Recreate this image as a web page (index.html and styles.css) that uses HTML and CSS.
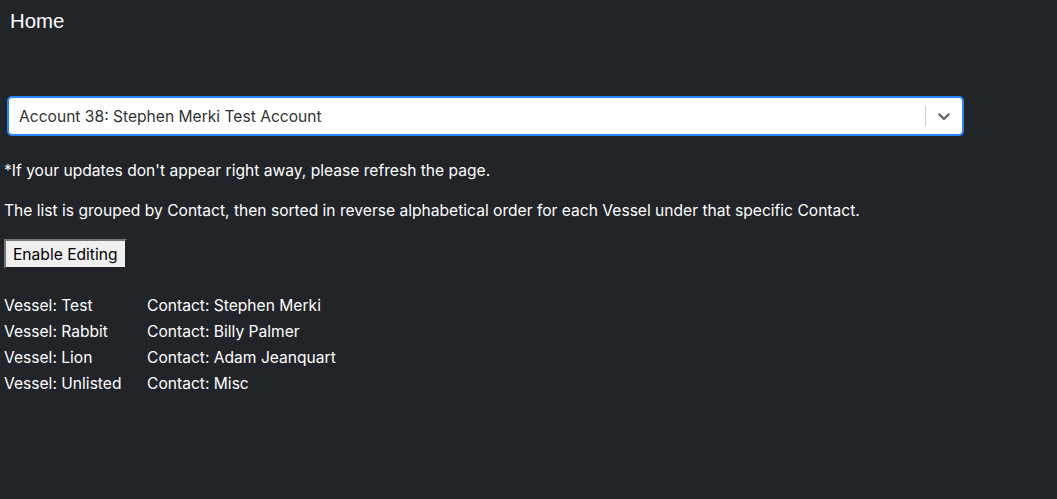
FILE: index.html
```html
<!DOCTYPE html>
<html>
<head>
<meta charset="utf-8">
<link rel="stylesheet" href="styles.css">
</head>
<body>
<header class="topbar"><span class="title">Home</span></header>
<main class="content">
  <div class="select">
    <div class="select-value">Account 38: Stephen Merki Test Account</div>
    <div class="select-indicators">
      <span class="sep"></span>
      <span class="chevron"><svg width="20" height="20" viewBox="0 0 20 20"><path fill="#666" d="M4.516 7.548c0.436-0.446 1.043-0.481 1.576 0l3.908 3.747 3.908-3.747c0.533-0.481 1.141-0.446 1.574 0 0.436 0.445 0.408 1.197 0 1.615-0.406 0.418-4.695 4.502-4.695 4.502-0.217 0.223-0.502 0.335-0.787 0.335s-0.57-0.112-0.789-0.335c0 0-4.287-4.084-4.695-4.502s-0.436-1.170 0-1.615z"/></svg></span>
    </div>
  </div>
  <p class="note">*If your updates don't appear right away, please refresh the page.</p>
  <p class="note">The list is grouped by Contact, then sorted in reverse alphabetical order for each Vessel under that specific Contact.</p>
  <button class="btn">Enable Editing</button>
  <div class="list">
    <div class="row"><span class="vessel">Vessel: Test</span><span>Contact: Stephen Merki</span></div>
    <div class="row"><span class="vessel">Vessel: Rabbit</span><span>Contact: Billy Palmer</span></div>
    <div class="row"><span class="vessel">Vessel: Lion</span><span>Contact: Adam Jeanquart</span></div>
    <div class="row"><span class="vessel">Vessel: Unlisted</span><span>Contact: Misc</span></div>
  </div>
</main>
</body>
</html>
```
FILE: styles.css
```css
html, body {
  margin: 0;
  padding: 0;
  background: #212428;
  color: #fff;
  font-family: "Inter", "Noto Sans", sans-serif;
  font-size: 15.6px;
}
.topbar {
  box-sizing: border-box;
  padding: 10px 10px 0 10px;
  height: 52px;
}
.title {
  font-family: "Liberation Sans", Arial, sans-serif;
  font-size: 20.4px;
  line-height: 23px;
}
.content {
  padding: 0 4px;
}
.select {
  margin: 45px 90px 0 4px;
  height: 38px;
  box-sizing: border-box;
  background: #fff;
  border: 1px solid #2684FF;
  box-shadow: 0 0 0 1px #2684FF;
  border-radius: 4px;
  display: flex;
  align-items: center;
}
.select-value {
  flex: 1;
  padding: 2px 10px;
  color: #333;
}
.select-indicators {
  display: flex;
  align-items: center;
  align-self: stretch;
}
.sep {
  width: 1px;
  background: #ccc;
  align-self: stretch;
  margin: 8px 0;
}
.chevron {
  padding: 8px;
  display: flex;
}
.note {
  margin: 26px 0 0 0;
  line-height: 20px;
}
.note + .note {
  margin-top: 20px;
}
.btn {
  margin-top: 18px;
  font-family: "Inter", "Noto Sans", sans-serif;
  font-size: 15.6px;
  padding: 4px 7px 3px;
  background: #efefef;
  color: #000;
  border: 2px outset #767676;
}
.list {
  margin-top: 24px;
  display: flex;
  flex-direction: column;
}
.row {
  display: flex;
  line-height: 26px;
}
.vessel {
  width: 143px;
}
```
